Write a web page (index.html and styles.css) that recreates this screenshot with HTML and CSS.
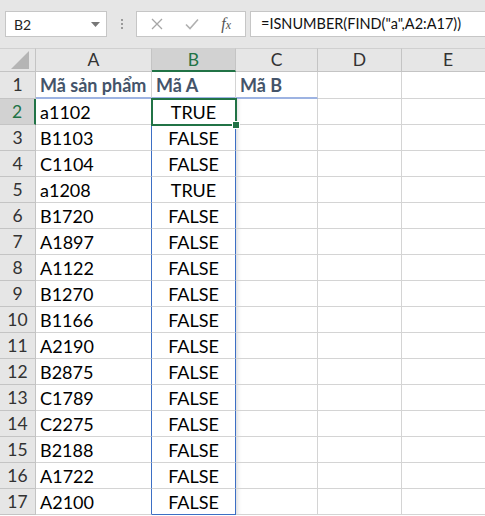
FILE: index.html
```
<!DOCTYPE html>
<html lang="vi">
<head>
    <meta charset="UTF-8">
    <title>ISNUMBER FIND</title>
    <link rel="stylesheet" href="styles.css">
</head>
<body>
    <div class="toolbar">
        <div class="namebox">
            <span>B2</span>
            <svg class="caret" width="9" height="5" viewBox="0 0 9 5"><path d="M0 0h9L4.5 5z" fill="#777"/></svg>
        </div>
        <div class="grip"><i></i><i></i><i></i></div>
        <div class="fx-buttons">
            <svg width="12" height="12" viewBox="0 0 12 12"><path d="M1 1l10 10M11 1L1 11" stroke="#a6a6a6" stroke-width="1.3" fill="none"/></svg>
            <svg width="14" height="12" viewBox="0 0 14 12"><path d="M1 6.5l4 4L13 1.5" stroke="#b0b0b0" stroke-width="1.6" fill="none"/></svg>
            <span class="fx">f<small>x</small></span>
        </div>
        <div class="formula">=ISNUMBER(FIND("a",A2:A17))</div>
    </div>

    <table class="sheet">
        <colgroup>
            <col class="c-num"><col class="c-a"><col class="c-b"><col class="c-c"><col class="c-d"><col class="c-e">
        </colgroup>
        <tr class="cols">
            <th class="corner"><svg width="18" height="18" viewBox="0 0 18 18"><path d="M18 0V18H0z" fill="#b5b5b5"/></svg></th>
            <th>A</th><th class="sel">B</th><th>C</th><th>D</th><th>E</th>
        </tr>
        <tr class="heading">
            <th>1</th><td>Mã sản phẩm</td><td>Mã A</td><td>Mã B</td><td></td><td></td>
        </tr>
        <tr class="data">
            <th class="sel">2</th><td>a1102</td><td class="active">TRUE</td><td></td><td></td><td></td>
        </tr>
        <tr class="data"><th>3</th><td>B1103</td><td>FALSE</td><td></td><td></td><td></td></tr>
        <tr class="data"><th>4</th><td>C1104</td><td>FALSE</td><td></td><td></td><td></td></tr>
        <tr class="data"><th>5</th><td>a1208</td><td>TRUE</td><td></td><td></td><td></td></tr>
        <tr class="data"><th>6</th><td>B1720</td><td>FALSE</td><td></td><td></td><td></td></tr>
        <tr class="data"><th>7</th><td>A1897</td><td>FALSE</td><td></td><td></td><td></td></tr>
        <tr class="data"><th>8</th><td>A1122</td><td>FALSE</td><td></td><td></td><td></td></tr>
        <tr class="data"><th>9</th><td>B1270</td><td>FALSE</td><td></td><td></td><td></td></tr>
        <tr class="data"><th>10</th><td>B1166</td><td>FALSE</td><td></td><td></td><td></td></tr>
        <tr class="data"><th>11</th><td>A2190</td><td>FALSE</td><td></td><td></td><td></td></tr>
        <tr class="data"><th>12</th><td>B2875</td><td>FALSE</td><td></td><td></td><td></td></tr>
        <tr class="data"><th>13</th><td>C1789</td><td>FALSE</td><td></td><td></td><td></td></tr>
        <tr class="data"><th>14</th><td>C2275</td><td>FALSE</td><td></td><td></td><td></td></tr>
        <tr class="data"><th>15</th><td>B2188</td><td>FALSE</td><td></td><td></td><td></td></tr>
        <tr class="data"><th>16</th><td>A1722</td><td>FALSE</td><td></td><td></td><td></td></tr>
        <tr class="data last"><th>17</th><td>A2100</td><td>FALSE</td><td></td><td></td><td></td></tr>
    </table>
</body>
</html>
```

FILE: styles.css
```
body {
    margin: 0;
    width: 485px;
    height: 516px;
    overflow: hidden;
    background-color: white;
    font-family: Lato, "Liberation Sans", sans-serif;
}
.toolbar {
    display: flex;
    align-items: center;
    height: 48px;
    padding-left: 5px;
    background-color: #e6e6e6;
    box-sizing: border-box;
}
.namebox {
    display: flex;
    align-items: center;
    justify-content: space-between;
    width: 102px;
    height: 26px;
    padding: 0 6px 0 8px;
    box-sizing: border-box;
    background-color: white;
    border: 1px solid #c6c6c6;
    font-size: 14px;
    color: #222;
}
.grip {
    display: flex;
    flex-direction: column;
    gap: 2px;
    margin: 0 13px 0 14px;
}
.grip i {
    width: 2px;
    height: 2px;
    background-color: #9a9a9a;
}
.fx-buttons {
    display: flex;
    align-items: center;
    justify-content: space-between;
    width: 110px;
    height: 26px;
    padding: 0 14px 0 14px;
    box-sizing: border-box;
    background-color: white;
    border: 1px solid #c6c6c6;
}
.fx {
    font-family: "Liberation Serif", serif;
    font-style: italic;
    font-size: 16px;
    color: #555;
}
.fx small {
    font-size: 12px;
}
.formula {
    flex: 1;
    height: 26px;
    margin: 0 -2px 0 4px;
    padding-left: 10px;
    box-sizing: border-box;
    background-color: white;
    border: 1px solid #c6c6c6;
    font-size: 14.5px;
    line-height: 24px;
    color: #111;
}
.sheet {
    table-layout: fixed;
    width: 495px;
    border-collapse: separate;
    border-spacing: 0;
    font-size: 18px;
}
.c-num { width: 36px; }
.c-a { width: 116px; }
.c-b { width: 84px; }
.c-c { width: 82px; }
.c-d { width: 84px; }
.c-e { width: 93px; }
.sheet th, .sheet td {
    box-sizing: border-box;
    height: 26px;
    padding: 0 4px;
    line-height: 20px;
    border-right: 1px solid #d4d4d4;
    border-bottom: 1px solid #d4d4d4;
    white-space: nowrap;
    overflow: hidden;
}
.sheet th {
    font-weight: normal;
    font-size: 17.5px;
    color: #333;
    background-color: #e6e6e6;
    border-color: #c4c4c4;
    text-align: center;
}
.cols th {
    height: 24px;
    border-top: 1px solid #d0d0d0;
}
.corner {
    padding: 0;
    vertical-align: bottom;
    text-align: right;
}
.corner svg {
    display: block;
    margin: 0 2px 2px auto;
}
.cols th.sel {
    color: #217346;
    background-color: #d2d2d2;
    border-bottom: 2px solid #217346;
}
.sheet tr th.sel:first-child {
    color: #217346;
    background-color: #d2d2d2;
    border-right: 2px solid #217346;
}
.heading th, .heading td {
    height: 27px;
}
.heading td {
    font-weight: bold;
    font-size: 18px;
    color: #44546a;
}
.heading td:nth-child(2),
.heading td:nth-child(3),
.heading td:nth-child(4) {
    border-bottom: 2px solid #9db3e2;
}
.data td:nth-child(3) {
    text-align: center;
    border-right-color: #3d6fc4;
}
.data td:nth-child(2) {
    border-right-color: #3d6fc4;
}
.data td:nth-child(4) {
    box-shadow: inset 6px 0 5px -5px rgba(0,0,0,0.18);
}
.data.last td:nth-child(3) {
    border-bottom-color: #3d6fc4;
}
.sheet td.active {
    position: relative;
    overflow: visible;
}
.active::before {
    content: '';
    position: absolute;
    top: -1px;
    left: -1px;
    right: -2px;
    bottom: -2px;
    border: 2px solid #217346;
}
.active::after {
    content: '';
    position: absolute;
    right: -5px;
    bottom: -5px;
    width: 6px;
    height: 6px;
    background-color: #217346;
    border: 1px solid white;
    z-index: 1;
}
```
